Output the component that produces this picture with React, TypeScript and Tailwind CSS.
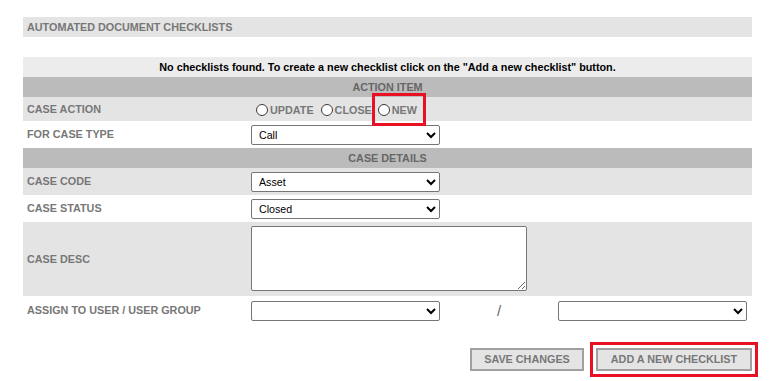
import React from "react";

const Radio = () => (
  <span className="inline-block w-[12px] h-[12px] rounded-full border border-[#3a3a3a] bg-white shrink-0" />
);

const Label = ({ children }: { children: React.ReactNode }) => (
  <div className="w-[228px] shrink-0 pl-[4px] font-bold text-[#777]">{children}</div>
);

const Select = ({ value }: { value: string }) => (
  <select
    defaultValue={value}
    className="w-[189px] h-[20px] border border-[#767676] rounded-[2px] bg-white text-black text-[10.67px] pl-[3px] font-['Liberation_Sans',Arial,sans-serif]"
  >
    <option value={value}>{value}</option>
  </select>
);

export default function App() {
  return (
    <div className="w-[779px] h-[381px] bg-white font-['Liberation_Sans',Arial,sans-serif] text-[10.8px] overflow-hidden">
      <div className="pt-[17px] pl-[23px] w-[752px]">
        <div className="h-[20px] bg-[#e4e4e4] flex items-center pl-[4px] font-bold text-[#777]">
          AUTOMATED DOCUMENT CHECKLISTS
        </div>
        <div className="mt-[20px] h-[20px] bg-[#ececec] flex items-center justify-center font-bold text-black">
          No checklists found. To create a new checklist click on the "Add a new checklist" button.
        </div>
        <div className="h-[20px] bg-[#bbbbbb] flex items-center justify-center font-bold text-[#666]">
          ACTION ITEM
        </div>
        <div className="h-[24px] bg-[#e4e4e4] flex items-center">
          <Label>CASE ACTION</Label>
          <div className="flex items-center font-bold text-[#777] pt-[2px]">
            <span className="flex items-center gap-[2px] ml-[5px]">
              <Radio />
              <span>UPDATE</span>
            </span>
            <span className="flex items-center gap-[2px] ml-[7px]">
              <Radio />
              <span>CLOSE</span>
            </span>
            <span className="relative flex items-center gap-[2px] ml-[6px]">
              <Radio />
              <span>NEW</span>
              <span className="absolute left-[-6px] right-[-9px] top-[-9px] bottom-[-8px] border-[3px] border-[#e81123]" />
            </span>
          </div>
        </div>
        <div className="h-[27px] bg-white flex items-center">
          <Label>FOR CASE TYPE</Label>
          <Select value="Call" />
        </div>
        <div className="h-[20px] bg-[#bbbbbb] flex items-center justify-center font-bold text-[#666]">
          CASE DETAILS
        </div>
        <div className="h-[27px] bg-[#e4e4e4] flex items-center">
          <Label>CASE CODE</Label>
          <Select value="Asset" />
        </div>
        <div className="h-[27px] bg-white flex items-center">
          <Label>CASE STATUS</Label>
          <Select value="Closed" />
        </div>
        <div className="h-[74px] bg-[#e4e4e4] flex items-center">
          <Label>CASE DESC</Label>
          <textarea className="w-[276px] h-[65px] border border-[#767676] rounded-[2px] bg-white mt-[-2px]" />
        </div>
        <div className="h-[29px] bg-white flex items-center">
          <Label>ASSIGN TO USER / USER GROUP</Label>
          <Select value="" />
          <div className="w-[118px] text-center text-[15px] text-[#666] leading-none">/</div>
          <Select value="" />
        </div>
        <div className="mt-[23px] flex justify-end gap-[12px]">
          <button className="w-[114px] h-[23px] border-2 border-[#a0a0a0] bg-[#e4e4e4] font-bold text-[#777]">
            SAVE CHANGES
          </button>
          <button className="w-[156px] h-[23px] border-2 border-[#a0a0a0] bg-[#e4e4e4] font-bold text-[#777] outline-[3px] outline-solid outline-[#e81123] outline-offset-[3px]">
            ADD A NEW CHECKLIST
          </button>
        </div>
      </div>
    </div>
  );
}
